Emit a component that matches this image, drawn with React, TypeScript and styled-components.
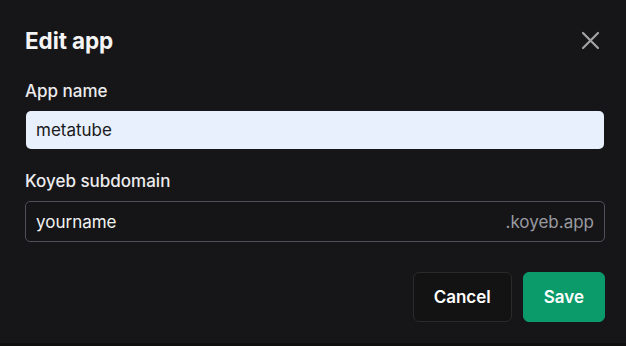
import React from "react";
import styled, { createGlobalStyle } from "styled-components";

const Global = createGlobalStyle`
  html, body { margin: 0; padding: 0; background: #0f0f10; }
  body { font-family: Inter, "Noto Sans", sans-serif; -webkit-font-smoothing: antialiased; }
  * { box-sizing: border-box; }
`;

const Dialog = styled.div`
  width: 626px;
  height: 343px;
  background: #161618;
  padding: 26px 21px 0 25px;
  display: flex;
  flex-direction: column;
`;

const Header = styled.div`
  display: flex;
  align-items: center;
  justify-content: space-between;
  height: 28px;
`;

const Title = styled.h2`
  margin: 0;
  font-size: 22.5px;
  font-weight: 700;
  color: #f4f4f5;
  letter-spacing: -0.1px;
`;

const Close = styled.button`
  background: none;
  border: none;
  padding: 0;
  margin-right: 5px;
  width: 20px;
  height: 20px;
  display: flex;
  align-items: center;
  justify-content: center;
  color: #a3a3a6;
  cursor: pointer;
`;

const Field = styled.div<{ $top: number }>`
  display: flex;
  flex-direction: column;
  gap: 10px;
  margin-top: ${(p) => p.$top}px;
`;

const Label = styled.label`
  font-size: 17px;
  font-weight: 500;
  color: #ececee;
  line-height: 20px;
`;

const TextInput = styled.div<{ $filled?: boolean }>`
  display: flex;
  align-items: center;
  justify-content: space-between;
  height: ${(p) => (p.$filled ? 38 : 41)}px;
  margin-left: ${(p) => (p.$filled ? 1 : 0)}px;
  margin-right: ${(p) => (p.$filled ? 1 : 0)}px;
  border-radius: 5px;
  padding: 0 10px;
  font-size: 17px;
  background: ${(p) => (p.$filled ? "#e8f0fe" : "#151517")};
  color: ${(p) => (p.$filled ? "#1a1a1a" : "#f2f2f3")};
  border: ${(p) => (p.$filled ? "none" : "1.5px solid #50505a")};
`;

const Suffix = styled.span`
  color: #9a9aa0;
`;

const Actions = styled.div`
  display: flex;
  justify-content: flex-end;
  gap: 11px;
  margin-top: 30px;
`;

const Button = styled.button<{ $primary?: boolean }>`
  height: 50px;
  padding: 0 20px;
  border-radius: 6px;
  font-family: inherit;
  font-size: 17px;
  font-weight: 600;
  color: #fff;
  background: ${(p) => (p.$primary ? "#0b9b6b" : "#131314")};
  border: 1px solid ${(p) => (p.$primary ? "#0b9b6b" : "#2a2a2d")};
  cursor: pointer;
`;

export default function App() {
  return (
    <>
      <Global />
      <Dialog>
        <Header>
          <Title>Edit app</Title>
          <Close aria-label="Close">
            <svg width="19" height="19" viewBox="0 0 19 19" fill="none">
              <path d="M2 2L17 17M17 2L2 17" stroke="currentColor" strokeWidth="2.2" strokeLinecap="round" />
            </svg>
          </Close>
        </Header>
        <Field $top={27}>
          <Label>App name</Label>
          <TextInput $filled>metatube</TextInput>
        </Field>
        <Field $top={22}>
          <Label>Koyeb subdomain</Label>
          <TextInput>
            <span>yourname</span>
            <Suffix>.koyeb.app</Suffix>
          </TextInput>
        </Field>
        <Actions>
          <Button>Cancel</Button>
          <Button $primary>Save</Button>
        </Actions>
      </Dialog>
    </>
  );
}
